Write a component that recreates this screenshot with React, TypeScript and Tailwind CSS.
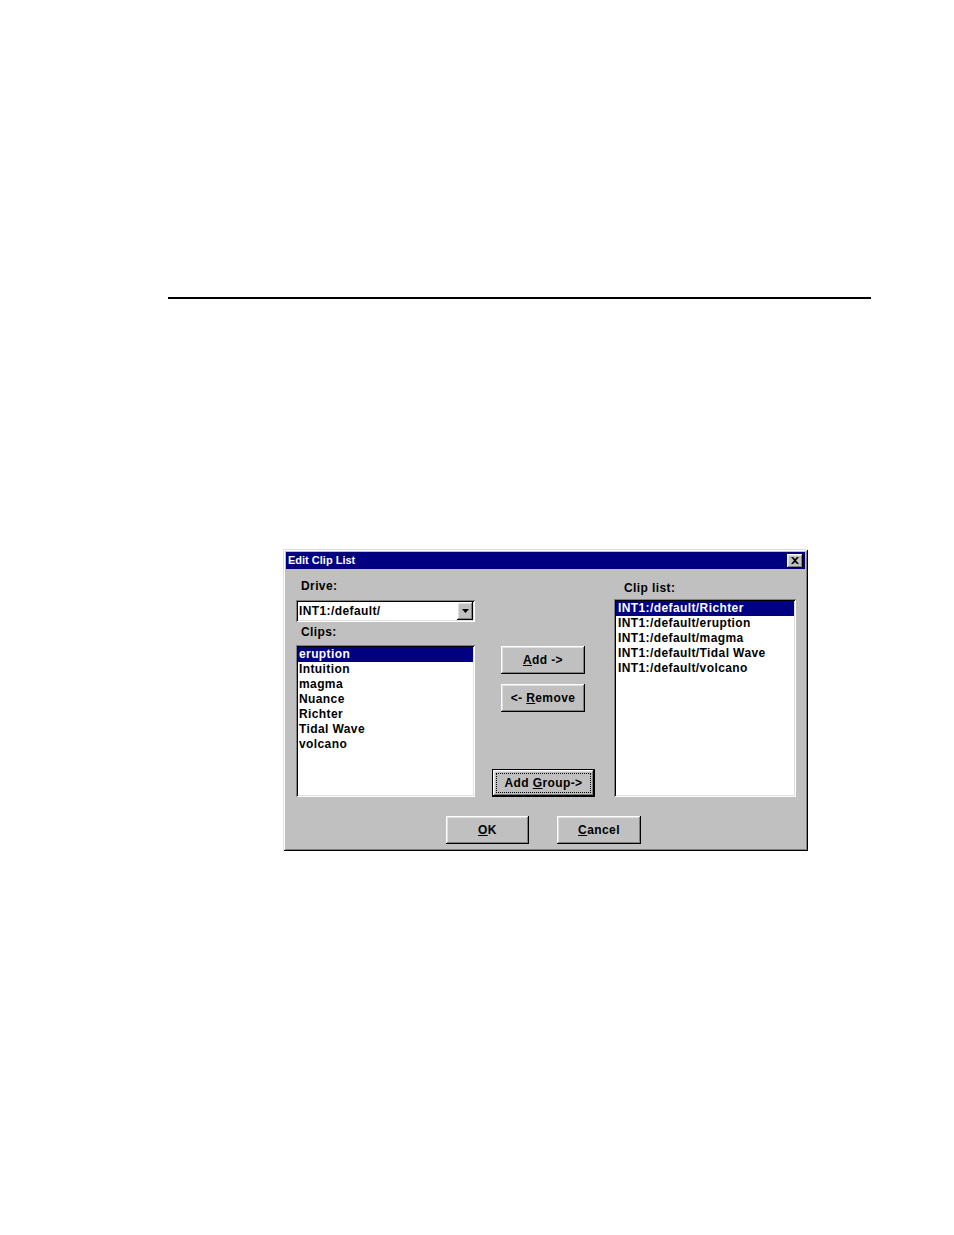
import React from "react";

const raised =
  "shadow-[inset_-1px_-1px_0_#000,inset_1px_1px_0_#fff,inset_-2px_-2px_0_#808080,inset_2px_2px_0_#dfdfdf]";
const sunken =
  "shadow-[inset_1px_1px_0_#808080,inset_-1px_-1px_0_#fff,inset_2px_2px_0_#000,inset_-2px_-2px_0_#dfdfdf]";

const clips = ["eruption", "Intuition", "magma", "Nuance", "Richter", "Tidal Wave", "volcano"];
const clipList = [
  "INT1:/default/Richter",
  "INT1:/default/eruption",
  "INT1:/default/magma",
  "INT1:/default/Tidal Wave",
  "INT1:/default/volcano",
];

function Label({ children, className = "" }: { children: React.ReactNode; className?: string }) {
  return (
    <div className={`h-[15px] text-[12px] leading-[15px] font-bold tracking-[0.4px] text-black ${className}`}>
      {children}
    </div>
  );
}

function WinButton({
  width,
  children,
  className = "",
}: {
  width: string;
  children: React.ReactNode;
  className?: string;
}) {
  return (
    <div
      className={`${width} h-[28px] bg-[#c0c0c0] ${raised} flex items-center justify-center text-[12px] font-bold tracking-[0.4px] text-black ${className}`}
    >
      {children}
    </div>
  );
}

function ListBox({
  items,
  height,
  width,
  pad,
}: {
  items: string[];
  height: string;
  width: string;
  pad: string;
}) {
  return (
    <div className={`${width} ${height} bg-white ${sunken} p-[2px]`}>
      {items.map((item, i) => (
        <div
          key={item}
          className={`h-[15px] ${pad} text-[12px] leading-[14px] font-bold tracking-[0.4px] whitespace-nowrap ${
            i === 0 ? "bg-[#000080] text-white" : "text-black"
          }`}
        >
          {item}
        </div>
      ))}
    </div>
  );
}

export default function App() {
  return (
    <div className="w-[954px] h-[1235px] bg-white pt-[297px] font-['Liberation_Sans',Arial,sans-serif]">
      <div className="ml-[168px] w-[703px] h-[2px] bg-black" />

      {/* dialog */}
      <div className="mt-[250px] ml-[283px] w-[525px] h-[302px] bg-[#c0c0c0] p-[3px] shadow-[inset_1px_1px_0_#dfdfdf,inset_-1px_-1px_0_#000,inset_2px_2px_0_#fff,inset_-2px_-2px_0_#808080]">
        {/* title bar */}
        <div className="h-[17px] bg-[#000080] flex items-center justify-between pl-[2px] pr-[2px]">
          <span className="text-[11px] font-bold text-white leading-none">Edit Clip List</span>
          <div className={`w-[16px] h-[14px] bg-[#c0c0c0] ${raised} flex items-center justify-center`}>
            <svg width="8" height="7" viewBox="0 0 8 7">
              <path d="M0 0h2l2 2 2-2h2L5 3.5 8 7H6L4 5 2 7H0l3-3.5z" fill="#000" />
            </svg>
          </div>
        </div>

        {/* body */}
        <div className="flex items-start">
          {/* left column */}
          <div className="ml-[10px] w-[179px]">
            <Label className="mt-[10px] ml-[5px]">Drive:</Label>
            <div className={`mt-[6px] h-[22px] bg-white ${sunken} p-[2px] flex items-center`}>
              <span className="flex-1 pl-[1px] text-[12px] font-bold tracking-[0.4px] text-black leading-none -mt-[1px]">
                INT1:/default/
              </span>
              <div className={`w-[16px] h-[18px] bg-[#c0c0c0] ${raised} flex items-center justify-center`}>
                <svg width="7" height="4" viewBox="0 0 7 4">
                  <path d="M0 0h7L3.5 4z" fill="#000" />
                </svg>
              </div>
            </div>
            <Label className="mt-[3px] ml-[5px]">Clips:</Label>
            <div className="mt-[5px]">
              <ListBox items={clips} width="w-[179px]" height="h-[152px]" pad="pl-[1px]" />
            </div>
          </div>

          {/* middle column */}
          <div className="ml-[17px] w-[103px] flex flex-col">
            <WinButton width="w-[84px]" className="ml-[9px] mt-[77px]">
              <span>
                <u>A</u>dd -&gt;
              </span>
            </WinButton>
            <WinButton width="w-[84px]" className="ml-[9px] mt-[10px]">
              <span>
                &lt;- <u>R</u>emove
              </span>
            </WinButton>
            <div className="mt-[57px] w-[103px] h-[28px] border border-black">
              <div className={`w-full h-full bg-[#c0c0c0] ${raised} p-[3px]`}>
                <div className="w-full h-full border border-dotted border-black flex items-center justify-center text-[12px] font-bold tracking-[0.4px] text-black">
                  <span>
                    Add <u>G</u>roup-&gt;
                  </span>
                </div>
              </div>
            </div>
          </div>

          {/* right column */}
          <div className="ml-[19px] w-[182px]">
            <Label className="mt-[12px] ml-[10px]">Clip list:</Label>
            <div className="mt-[3px]">
              <ListBox items={clipList} width="w-[182px]" height="h-[198px]" pad="pl-[2px]" />
            </div>
          </div>
        </div>

        {/* bottom buttons */}
        <div className="mt-[19px] ml-[160px] flex">
          <WinButton width="w-[83px]">
            <span>
              <u>O</u>K
            </span>
          </WinButton>
          <WinButton width="w-[84px]" className="ml-[28px]">
            <span>
              <u>C</u>ancel
            </span>
          </WinButton>
        </div>
      </div>
    </div>
  );
}
